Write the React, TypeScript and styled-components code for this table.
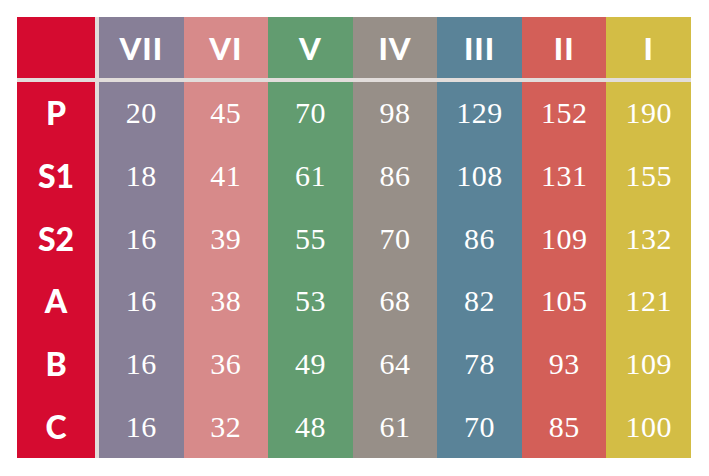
import React from 'react';
import styled, { createGlobalStyle } from 'styled-components';

const GlobalStyle = createGlobalStyle`
  html, body {
    margin: 0;
    background: #ffffff;
  }
  body {
    padding: 17px;
  }
`;

const Table = styled.div`
  display: grid;
  grid-template-columns: 82px repeat(7, 1fr);
  grid-template-rows: 65px repeat(6, 1fr);
  width: 674px;
  height: 441px;
  background: #e2dddb;
`;

const Cell = styled.div<{ $bg: string; $sepRight?: boolean; $sepBottom?: boolean }>`
  display: flex;
  align-items: center;
  justify-content: center;
  background: ${({ $bg }) => $bg};
  color: #ffffff;
  margin-right: ${({ $sepRight }) => ($sepRight ? '4px' : '0')};
  margin-bottom: ${({ $sepBottom }) => ($sepBottom ? '4px' : '0')};
`;

const HeadText = styled.span`
  font-family: Lato, 'Open Sans', sans-serif;
  font-weight: 900;
  font-size: 31px;
  letter-spacing: 1px;
  line-height: 1;
  padding-top: 2px;
`;

const LabelText = styled(HeadText)`
  font-size: 32px;
  letter-spacing: 0;
  padding-top: 0;
`;

const Value = styled.span`
  font-family: 'Liberation Serif', 'DejaVu Serif', serif;
  font-size: 30px;
  letter-spacing: 0.5px;
  line-height: 1;
`;

const LABEL_RED = '#d50b30';

const columns = [
  { name: 'VII', color: '#877f97' },
  { name: 'VI', color: '#d78a8a' },
  { name: 'V', color: '#629c70' },
  { name: 'IV', color: '#978f88' },
  { name: 'III', color: '#5a8398' },
  { name: 'II', color: '#d35f58' },
  { name: 'I', color: '#d3bd45' },
];

const rows = [
  { label: 'P', values: [20, 45, 70, 98, 129, 152, 190] },
  { label: 'S1', values: [18, 41, 61, 86, 108, 131, 155] },
  { label: 'S2', values: [16, 39, 55, 70, 86, 109, 132] },
  { label: 'A', values: [16, 38, 53, 68, 82, 105, 121] },
  { label: 'B', values: [16, 36, 49, 64, 78, 93, 109] },
  { label: 'C', values: [16, 32, 48, 61, 70, 85, 100] },
];

const App: React.FC = () => {
  return (
    <>
      <GlobalStyle />
      <Table>
        <Cell $bg={LABEL_RED} $sepRight $sepBottom />
        {columns.map((col) => (
          <Cell key={col.name} $bg={col.color} $sepBottom>
            <HeadText>{col.name}</HeadText>
          </Cell>
        ))}
        {rows.map((row) => (
          <React.Fragment key={row.label}>
            <Cell $bg={LABEL_RED} $sepRight>
              <LabelText>{row.label}</LabelText>
            </Cell>
            {row.values.map((v, i) => (
              <Cell key={i} $bg={columns[i].color}>
                <Value>{v}</Value>
              </Cell>
            ))}
          </React.Fragment>
        ))}
      </Table>
    </>
  );
};

export default App;
